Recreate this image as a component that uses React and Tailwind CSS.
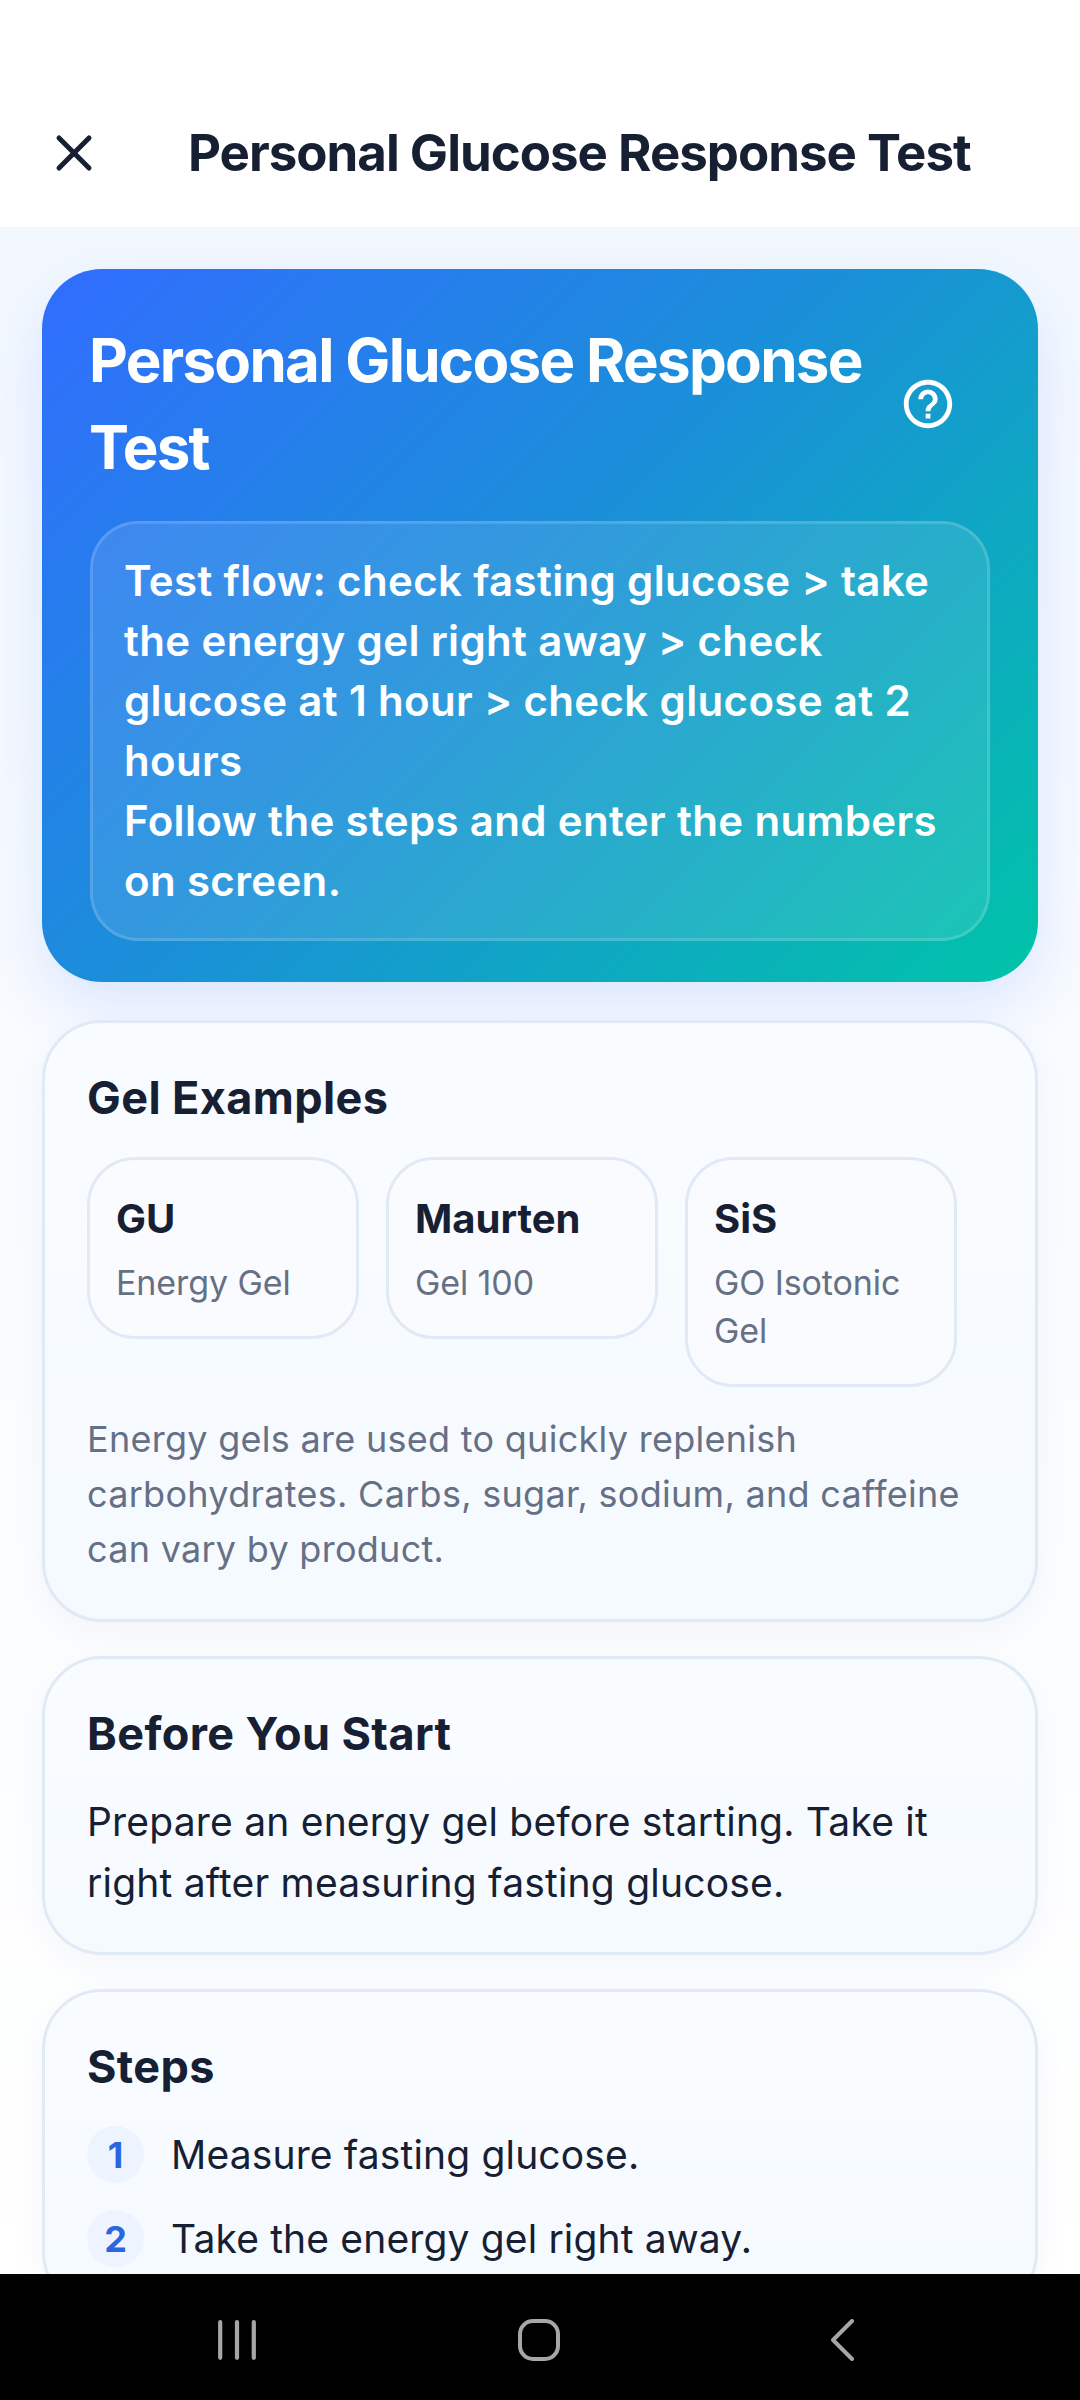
import { X } from 'lucide-react';
import { MdHelpOutline } from 'react-icons/md';

const gels = [
  { brand: 'GU', name: 'Energy Gel' },
  { brand: 'Maurten', name: 'Gel 100' },
  { brand: 'SiS', name: 'GO Isotonic Gel' },
];

const steps = ['Measure fasting glucose.', 'Take the energy gel right away.'];

function Card({ title, children }) {
  return (
    <section className="shrink-0 rounded-[60px] border-[3px] border-[#e0eaf7] bg-gradient-to-b from-[#f9fcff] to-[#f5faff] px-[42px] pt-[48px] shadow-[0_12px_36px_rgba(30,60,120,0.04)]">
      <h3 className="text-[45px] leading-[54px] font-bold tracking-[0.4px] text-[#172033]">{title}</h3>
      {children}
    </section>
  );
}

export default function App() {
  return (
    <div className="flex h-[2400px] w-[1080px] flex-col overflow-hidden bg-white font-['Inter',sans-serif]">
      <header className="flex h-[227px] shrink-0 items-end bg-white pb-[38px] pl-[44px]">
        <div className="flex items-center">
          <X className="h-[60px] w-[60px] shrink-0 text-[#172033]" strokeWidth={2} />
          <h1 className="ml-[84px] text-[51px] leading-[72px] font-bold tracking-[-1px] whitespace-nowrap text-[#172033]">Personal Glucose Response Test</h1>
        </div>
      </header>

      <main className="flex min-h-0 flex-1 flex-col gap-[34px] overflow-hidden bg-gradient-to-b from-[#f3f8fe] to-white px-[42px] pt-[42px]">
        <section className="mb-[4px] shrink-0 rounded-[60px] bg-[linear-gradient(135deg,#316dff_0%,#1a90d8_48%,#00c4a8_100%)] px-[48px] pt-[48px] pb-[41px] shadow-[0_24px_60px_rgba(49,109,255,0.14)]">
          <div className="flex items-center">
            <h2 className="-ml-[1px] min-w-0 flex-1 text-[60px] leading-[87px] font-bold tracking-[-1.7px] text-white">Personal Glucose Response Test</h2>
            <MdHelpOutline className="mr-[33px] ml-[24px] h-[58px] w-[58px] shrink-0 text-white" />
          </div>
          <div className="mt-[30px] rounded-[48px] border-[3px] border-white/15 bg-white/10 px-[31px] pt-[27px] pb-[27px] text-[42px] leading-[60px] font-semibold tracking-[0.35px] text-white">
            <p>Test flow: check fasting glucose &gt; take the energy gel right away &gt; check glucose at 1 hour &gt; check glucose at 2 hours</p>
            <p>Follow the steps and enter the numbers on screen.</p>
          </div>
        </section>

        <Card title="Gel Examples">
          <div className="mt-[32px] flex items-start gap-[27px]">
            {gels.map((gel) => (
              <div key={gel.brand} className="w-[272px] shrink-0 rounded-[48px] border-[3px] border-[#e0eaf7] bg-[#fafbfe] px-[26px] pt-[32px] pb-[29px]">
                <div className="text-[40px] leading-[54px] font-bold text-[#172033]">{gel.brand}</div>
                <div className="mt-[13px] text-[34px] leading-[48px] tracking-[-0.1px] text-[#667085]">{gel.name}</div>
              </div>
            ))}
          </div>
          <p className="mt-[25px] pb-[42px] text-[36px] leading-[55px] tracking-[0.28px] text-[#667085]">
            Energy gels are used to quickly replenish carbohydrates. Carbs, sugar, sodium, and caffeine can vary by product.
          </p>
        </Card>

        <Card title="Before You Start">
          <p className="mt-[30px] pb-[39px] text-[39px] leading-[61px] tracking-[0.2px] text-[#172033]">
            Prepare an energy gel before starting. Take it right after measuring fasting glucose.
          </p>
        </Card>

        <Card title="Steps">
          <div className="mt-[32px] flex flex-col gap-[27px] pb-[42px]">
            {steps.map((step, i) => (
              <div key={step} className="flex items-center gap-[27px]">
                <span className="flex h-[57px] w-[57px] shrink-0 items-center justify-center rounded-full bg-[#eef4ff] text-[36px] font-bold text-[#2a66e0]">{i + 1}</span>
                <span className="text-[39px] leading-[57px] tracking-[0.15px] text-[#172033]">{step}</span>
              </div>
            ))}
          </div>
        </Card>
      </main>

      <nav className="flex h-[126px] shrink-0 items-center bg-black pt-[6px] pl-[218px]">
        <svg width="38" height="40" viewBox="0 0 38 40" fill="none" stroke="#a6a6a6" strokeWidth="4.2" strokeLinecap="round">
          <path d="M2.2 2.2v35.6M19 2.2v35.6M35.8 2.2v35.6" />
        </svg>
        <svg className="ml-[262px]" width="42" height="42" viewBox="0 0 42 42" fill="none" stroke="#a6a6a6" strokeWidth="4">
          <rect x="2" y="2" width="38" height="38" rx="13" />
        </svg>
        <svg className="ml-[271px]" width="23" height="42" viewBox="0 0 23 42" fill="none" stroke="#a6a6a6" strokeWidth="4" strokeLinecap="round" strokeLinejoin="round">
          <path d="M21 2 2 21l19 19" />
        </svg>
      </nav>
    </div>
  );
}
